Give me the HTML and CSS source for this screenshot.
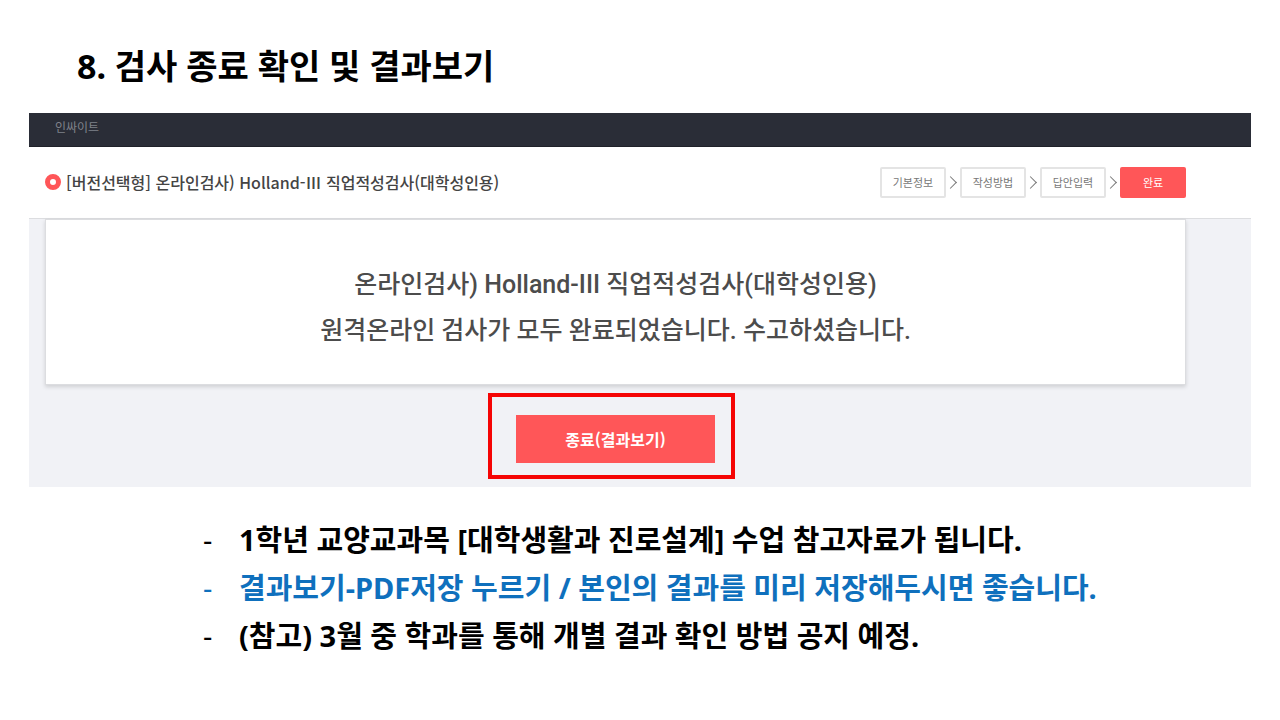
FILE: index.html
```html
<!DOCTYPE html>
<html lang="ko">

<head>
    <meta charset="UTF-8">
    <meta name="viewport" content="width=device-width, initial-scale=1.0">
    <title>검사 종료 확인 및 결과보기</title>
    <link rel="stylesheet" href="styles.css">
</head>

<body>
    <h1 class="slide-title">8. 검사 종료 확인 및 결과보기</h1>

    <div class="screen">
        <div class="topbar">
            <a class="topbar-link" href="#">인싸이트</a>
        </div>

        <div class="test-header">
            <h2 class="test-name">
                <svg class="test-icon" viewBox="0 0 16 16">
                    <circle cx="8" cy="8" r="5.5" fill="none" stroke="#ff5658" stroke-width="5" />
                </svg>
                [버전선택형] 온라인검사) Holland-Ⅲ 직업적성검사(대학성인용)
            </h2>
            <ol class="steps">
                <li class="step">기본정보</li>
                <li class="step">작성방법</li>
                <li class="step">답안입력</li>
                <li class="step active">완료</li>
            </ol>
        </div>

        <div class="test-body">
            <div class="message">
                <p>온라인검사) Holland-III 직업적성검사(대학성인용)</p>
                <p>원격온라인 검사가 모두 완료되었습니다. 수고하셨습니다.</p>
            </div>
            <div class="finish">
                <button class="finish-btn" type="button">종료(결과보기)</button>
            </div>
        </div>
    </div>

    <ul class="notes">
        <li>1학년 교양교과목 [대학생활과 진로설계] 수업 참고자료가 됩니다.</li>
        <li class="blue">결과보기-PDF저장 누르기 / 본인의 결과를 미리 저장해두시면 좋습니다.</li>
        <li>(참고) 3월 중 학과를 통해 개별 결과 확인 방법 공지 예정.</li>
    </ul>
</body>

</html>
```

FILE: styles.css
```css
* {
    box-sizing: border-box;
}

body {
    margin: 0;
    background-color: #fff;
    color: #000;
    font-family: "Noto Sans", "Noto Sans CJK KR", sans-serif;
}

h1,
h2,
p,
ol,
ul {
    margin: 0;
    padding: 0;
    list-style: none;
}

.slide-title {
    padding: 42px 77px 23px;
    font-size: 34px;
    line-height: 48px;
    font-weight: bold;
}

.screen {
    margin: 0 29px;
    background-color: #f1f2f6;
    font-family: "Noto Sans CJK KR", sans-serif;
}

.topbar {
    height: 34px;
    padding: 4px 26px;
    background-color: #2a2d37;
    border-bottom: 1px solid #1f2129;
}

.topbar-link {
    display: block;
    font-size: 12px;
    line-height: 20px;
    color: #7f828a;
    text-decoration: none;
}

.test-header {
    display: flex;
    justify-content: space-between;
    align-items: center;
    height: 72px;
    padding: 0 65px 0 16px;
    background-color: #fff;
    border-bottom: 1px solid #dcdde0;
}

.test-name {
    display: flex;
    align-items: center;
    gap: 5px;
    padding-bottom: 2px;
    font-size: 16px;
    line-height: 24px;
    font-weight: 500;
    color: #444;
}

.test-icon {
    width: 16px;
    height: 16px;
}

.steps {
    display: flex;
}

.step {
    display: flex;
    align-items: center;
    justify-content: center;
    width: 66px;
    height: 31px;
    padding-bottom: 2px;
    border: 2px solid #e4e4e4;
    border-radius: 2px;
    font-size: 11px;
    color: #777;
}

.step + .step {
    position: relative;
    margin-left: 14px;
}

/* arrow between two steps */
.step + .step::before {
    content: "";
    position: absolute;
    left: -16px;
    top: 9px;
    width: 8px;
    height: 8px;
    border-top: 1px solid #777;
    border-right: 1px solid #777;
    transform: rotate(45deg);
}

.step.active {
    border-color: #ff5658;
    background-color: #ff5658;
    color: #fff;
}

.test-body {
    padding: 0 65px 24px 16px;
}

.message {
    padding: 42px 20px 30px;
    background-color: #fff;
    border: 1px solid #dcdde0;
    box-shadow: 0 2px 4px rgba(0, 0, 0, .14);
    font-family: Roboto, "Noto Sans CJK KR", sans-serif;
    font-size: 25px;
    line-height: 46px;
    font-weight: 500;
    color: #4c4c4c;
    text-align: center;
}

.finish {
    position: relative;
    width: 199px;
    margin: 30px auto 0;
}

/* red marker around the button */
.finish::after {
    content: "";
    position: absolute;
    inset: -22px -20px -16px -28px;
    border: 4px solid #f50505;
    pointer-events: none;
}

.finish-btn {
    display: block;
    width: 100%;
    height: 48px;
    padding: 0;
    border: 0;
    background-color: #ff5658;
    color: #fff;
    font-family: inherit;
    font-size: 16px;
    font-weight: bold;
    cursor: pointer;
}

.notes {
    padding: 29px 77px 30px 203px;
    font-size: 29px;
    line-height: 48px;
    font-weight: bold;
}

.notes li {
    display: flex;
}

.notes li::before {
    content: "-";
    flex: 0 0 36px;
    font-weight: normal;
}

.notes .blue {
    color: #0f70bd;
}
```
